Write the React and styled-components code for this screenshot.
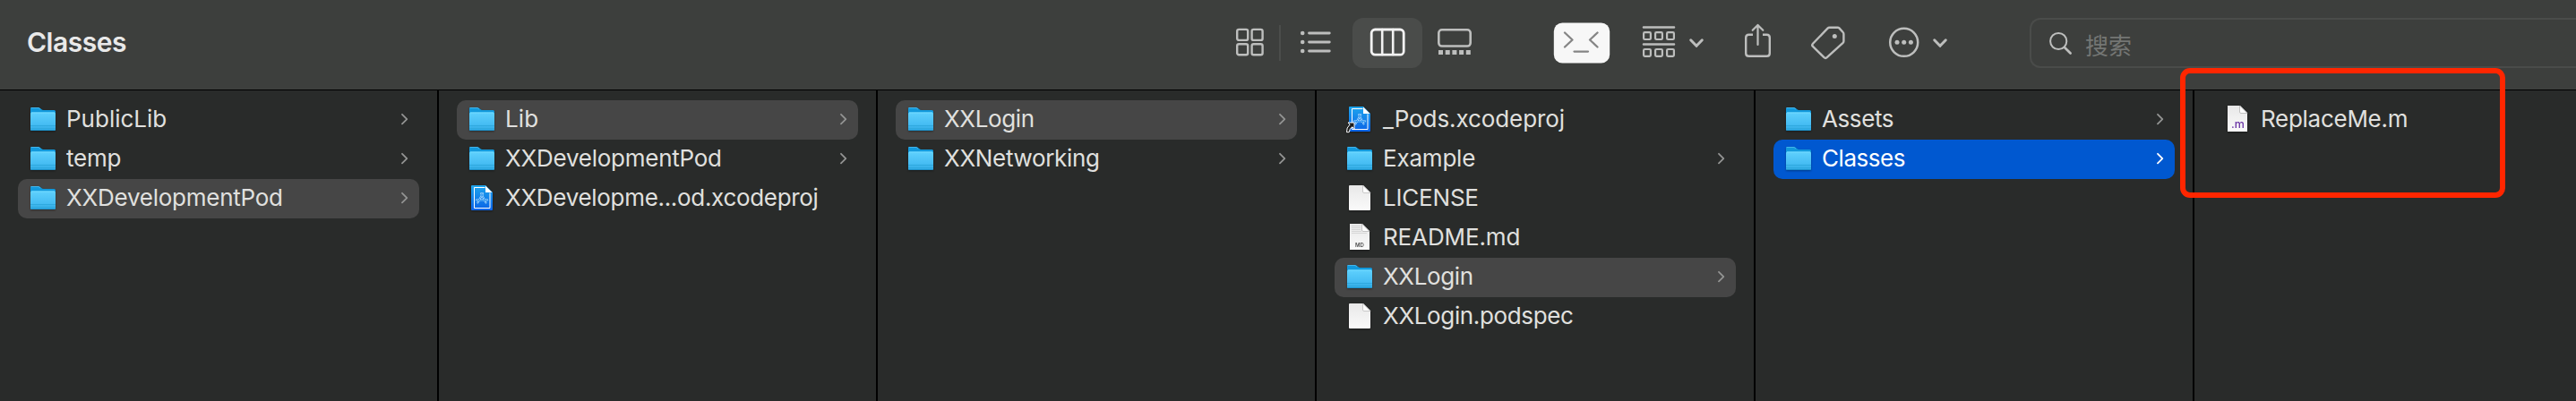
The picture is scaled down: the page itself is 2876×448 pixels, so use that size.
import React from "react";
import styled, { createGlobalStyle } from "styled-components";

const Global = createGlobalStyle`
  * { box-sizing: border-box; }
  html, body { margin: 0; height: 100%; overflow: hidden; background: #292b2a; }
`;

const Window = styled.main`
  position: relative;
  display: flex;
  flex-direction: column;
  width: 2876px;
  height: 448px;
  overflow: hidden;
  background: #292b2a;
  color: #e0e0df;
  font-family: Inter, "Noto Sans CJK SC", sans-serif;
`;

const Toolbar = styled.header`
  flex: none;
  display: flex;
  align-items: center;
  height: 101px;
  padding: 0 0 4px 30px;
  background: #3d3f3d;
  border-bottom: 1px solid #000;
  color: #bdbebd;
`;

const Title = styled.h1`
  flex: 0 0 1350px;
  margin: 0;
  padding-bottom: 2px;
  font-size: 30px;
  line-height: 40px;
  font-weight: 600;
  letter-spacing: -0.5px;
  color: #e9e9e9;
`;

const ToolGroup = styled.div`
  display: flex;
  align-items: center;
  margin-left: ${(p) => p.$before || 0}px;
  gap: ${(p) => p.$gap || 0}px;
`;

const ToolIcon = styled.svg`
  display: block;
  flex: none;
  overflow: visible;
  fill: none;
  stroke: currentColor;
  stroke-width: 2.4;
  stroke-linecap: round;
  stroke-linejoin: round;
`;

const Separator = styled.span`
  width: 2px;
  height: 40px;
  margin: 0 22px 0 17px;
  background: #4b4d4b;
`;

const ActiveTool = styled.span`
  display: flex;
  justify-content: center;
  align-items: center;
  width: 78px;
  height: 56px;
  margin: 0 17px 0 24px;
  border-radius: 12px;
  background: #4a4c4a;
  color: #f2f2f2;
`;

const SearchField = styled.div`
  flex: 1;
  display: flex;
  align-items: center;
  gap: 15px;
  height: 56px;
  margin-left: 92px;
  padding-left: 20px;
  border: 2px solid #4a4c4a;
  border-right: 0;
  border-radius: 12px 0 0 12px;
`;

const Placeholder = styled.span`
  padding-top: 3px;
  font-family: "Noto Sans CJK SC", sans-serif;
  font-size: 26px;
  line-height: 40px;
  color: #747674;
`;

const Browser = styled.section`
  flex: 1;
  display: flex;
  min-height: 0;
`;

const Column = styled.ul`
  flex: 0 0 490px;
  margin: 0;
  padding: 11px 20px 0;
  list-style: none;
  border-right: 2px solid #000;

  &:last-child {
    flex: 1;
    border-right: 0;
  }
`;

const ROW_BACKGROUND = { path: "#464646", focus: "#0058d0" };

const Row = styled.li`
  display: flex;
  align-items: center;
  height: 44px;
  padding: 0 12px;
  border-radius: 10px;
  background: ${(p) => ROW_BACKGROUND[p.$state] || "transparent"};
  color: ${(p) => (p.$state === "focus" ? "#fff" : "inherit")};
`;

const FileIcon = styled.svg`
  flex: none;
  display: block;
  margin-right: 10px;
  overflow: visible;
  filter: drop-shadow(0 1px 1px rgba(0, 0, 0, 0.35));
`;

const Label = styled.span`
  flex: 1;
  padding-bottom: 3px;
  font-size: 26px;
  line-height: 41px;
  letter-spacing: ${(p) => p.$tracking || 0}px;
  white-space: nowrap;
`;

const RowChevron = styled.svg`
  flex: none;
  display: block;
  fill: none;
  stroke: ${(p) => (p.$state === "focus" ? "#fff" : "#939493")};
  stroke-width: 1.8;
  stroke-linecap: round;
  stroke-linejoin: round;
`;

const Highlight = styled.div`
  position: absolute;
  left: 2434px;
  top: 76px;
  width: 363px;
  height: 145px;
  border: 6px solid #ff2600;
  border-radius: 11px;
`;

const Folder = () => (
  <FileIcon width="32" height="32" viewBox="0 0 32 32">
    <path d="M2 3.500Q2 2 3.500 2h7q1.300 0 2.200.8l1.500 1.300q1 .9 2.300.9h12Q30 5 30 6.500V12H2z" fill="#1299dc" />
    <path d="M2.500 2.500h8.500l2 1.500" stroke="#43b4ea" strokeWidth="1" fill="none" />
    <path d="M2 9Q2 7.500 3.500 7.500h25Q30 7.500 30 9v17.500Q30 28 28.500 28h-25Q2 28 2 26.500z" fill="url(#folderFront)" />
    <path d="M3 8h26" stroke="#74dbff" strokeWidth="1" />
    <path d="M2 22.500h28M2 25.500h28" stroke="#2fa9df" strokeWidth="1" />
    <path d="M2.500 27.500h27" stroke="#1c93cc" strokeWidth="1" />
  </FileIcon>
);

const Plain = () => (
  <FileIcon width="32" height="32" viewBox="0 0 32 32">
    <path d="M5 1h15l8 8v19q0 1-1 1H5q-1 0-1-1V2q0-1 1-1z" fill="url(#paper)" />
    <path d="M19.500 1l8.500 8.500h-7q-1.500 0-1.500-1.500z" fill="#fff" stroke="#bcbcbc" strokeWidth=".8" />
  </FileIcon>
);

const NarrowPage = () => (
  <>
    <path d="M5 0h14l8 8v21H5z" fill="url(#paper)" />
    <path d="M18.500 0L27 8.500h-7q-1.500 0-1.500-1.500z" fill="#fff" stroke="#b5b5b5" strokeWidth=".8" />
  </>
);

const Markdown = () => (
  <FileIcon width="32" height="32" viewBox="0 0 32 32">
    <NarrowPage />
    <path d="M7 2.500h10M7 4.500h10M7 6.500h10M7 8.500h11M7 10.500h17" stroke="#cfcfcf" strokeWidth=".8" />
    <text x="16" y="25.800" textAnchor="middle" fontSize="6" fontWeight="600" fontFamily="Inter, sans-serif" fill="#4c4c4c">MD</text>
  </FileIcon>
);

const ObjC = () => (
  <FileIcon width="32" height="32" viewBox="0 0 32 32">
    <NarrowPage />
    <text x="16.500" y="25" textAnchor="middle" fontSize="12.500" fontWeight="500" fontFamily="Inter, sans-serif" fill="#6a35a5">.m</text>
  </FileIcon>
);

const Xcode = ({ alias }) => (
  <FileIcon width="32" height="32" viewBox="0 0 32 32">
    <path d="M5 1h15l8 8v19q0 1-1 1H5q-1 0-1-1V2q0-1 1-1z" fill="url(#xcode)" />
    <path d="M19.500 3.500H7.500v23h17.500V9.500" fill="none" stroke="#fff" strokeWidth="1" />
    <path d="M20 1.500l7.500 7.500H20z" fill="#fff" />
    <path d="M15.200 10.200l5.300 10.200M17 10.200l-5.600 10.200M10 17.400h12.200" fill="none" stroke="#d8eeff" strokeWidth="1.900" strokeLinecap="round" />
    <path d="M15.200 10.200l5.300 10.200M17 10.200l-5.600 10.200M10 17.400h12.200" fill="none" stroke="#1a8df0" strokeWidth=".9" strokeLinecap="round" />
    {alias && (
      <path d="M3 19h7v7l-2.300-2.300q-3 2-3.500 6H1.500q-.5-5 3.500-8.500z" fill="#1c1c1c" stroke="#fff" strokeWidth="1" strokeLinejoin="round" />
    )}
  </FileIcon>
);

const ICONS = {
  folder: <Folder />,
  file: <Plain />,
  md: <Markdown />,
  objc: <ObjC />,
  xcode: <Xcode />,
  alias: <Xcode alias />,
};

const COLUMNS = [
  [
    { name: "PublicLib", icon: "folder", tracking: 0 },
    { name: "temp", icon: "folder", tracking: -0.2 },
    { name: "XXDevelopmentPod", icon: "folder", tracking: -0.25, state: "path" },
  ],
  [
    { name: "Lib", icon: "folder", tracking: 0.1, state: "path" },
    { name: "XXDevelopmentPod", icon: "folder", tracking: -0.25 },
    { name: "XXDevelopme...od.xcodeproj", icon: "xcode", tracking: -0.31 },
  ],
  [
    { name: "XXLogin", icon: "folder", tracking: -0.38, state: "path" },
    { name: "XXNetworking", icon: "folder", tracking: -0.33 },
  ],
  [
    { name: "_Pods.xcodeproj", icon: "alias", tracking: -0.08 },
    { name: "Example", icon: "folder", tracking: -0.2 },
    { name: "LICENSE", icon: "file", tracking: -0.2 },
    { name: "README.md", icon: "md", tracking: -0.12 },
    { name: "XXLogin", icon: "folder", tracking: -0.38, state: "path" },
    { name: "XXLogin.podspec", icon: "file", tracking: -0.36 },
  ],
  [
    { name: "Assets", icon: "folder", tracking: -0.4 },
    { name: "Classes", icon: "folder", tracking: -0.45, state: "focus" },
  ],
  [{ name: "ReplaceMe.m", icon: "objc", tracking: -0.28 }],
];

const Entry = ({ item }) => (
  <Row $state={item.state}>
    {ICONS[item.icon]}
    <Label $tracking={item.tracking}>{item.name}</Label>
    {item.icon === "folder" && (
      <RowChevron $state={item.state} width="8" height="16" viewBox="0 0 8 16">
        <path d="M1 1.800l5.300 5.300L1 12.400" />
      </RowChevron>
    )}
  </Row>
);

const DropChevron = () => (
  <ToolIcon width="16" height="48" viewBox="0 0 16 48">
    <path d="M1.700 20.800L8 27.300l6.300-6.500" strokeWidth="3" />
  </ToolIcon>
);

const Gradients = () => (
  <svg width="0" height="0" display="block">
    <defs>
      <linearGradient id="folderFront" x1="0" y1="0" x2="0" y2="1">
        <stop offset="0" stopColor="#5fd0fd" />
        <stop offset=".65" stopColor="#46bdf3" />
        <stop offset="1" stopColor="#2fa8e2" />
      </linearGradient>
      <linearGradient id="paper" x1="0" y1="0" x2="0" y2="1">
        <stop offset="0" stopColor="#e8e8e8" />
        <stop offset="1" stopColor="#fafafa" />
      </linearGradient>
      <linearGradient id="xcode" x1="0" y1="0" x2="0" y2="1">
        <stop offset="0" stopColor="#1ea6ee" />
        <stop offset="1" stopColor="#0a62e6" />
      </linearGradient>
    </defs>
  </svg>
);

export default function App() {
  return (
    <Window>
      <Global />
      <Gradients />
      <Toolbar>
        <Title>Classes</Title>
        <ToolGroup>
          <ToolIcon width="31" height="48" viewBox="0 0 31 48">
            <rect x="1.200" y="8.900" width="12" height="12" rx="2" />
            <rect x="17.600" y="8.900" width="12" height="12" rx="2" />
            <rect x="1.200" y="25.200" width="12" height="12" rx="2" />
            <rect x="17.600" y="25.200" width="12" height="12" rx="2" />
          </ToolIcon>
          <Separator />
          <ToolIcon width="34" height="48" viewBox="0 0 34 48">
            <path d="M9.500 13h22.800M9.500 23h22.800M9.500 33h22.800" strokeWidth="2.800" />
            <g fill="currentColor" stroke="none">
              <circle cx="2.200" cy="13" r="2.300" />
              <circle cx="2.200" cy="23" r="2.300" />
              <circle cx="2.200" cy="33" r="2.300" />
            </g>
          </ToolIcon>
          <ActiveTool>
            <ToolIcon width="38" height="48" viewBox="0 0 38 48">
              <rect x="1.200" y="9" width="36" height="28.200" rx="4" strokeWidth="2.800" />
              <path d="M13.200 9v28M25.200 9v28" strokeWidth="2.600" />
            </ToolIcon>
          </ActiveTool>
          <ToolIcon width="38" height="48" viewBox="0 0 38 48">
            <rect x="1.300" y="9.300" width="35.400" height="18.200" rx="3.500" strokeWidth="2.600" />
            <path d="M1 32h5v5h-5zM8.700 32h5v5h-5zM16.400 32h5v5h-5zM24.100 32h5v5h-5zM31.800 32h5v5h-5z" fill="currentColor" stroke="none" />
          </ToolIcon>
        </ToolGroup>
        <ToolGroup $before={91}>
          <ToolIcon width="64" height="48" viewBox="0 0 64 48">
            <rect x=".8" y="1.500" width="62.400" height="45" rx="9.500" fill="#f7f7f7" stroke="none" />
            <path d="M13 12.500l8.500 8L13 28.500M49.500 12.500L41 20.500l8.500 8M23.500 33.600h15.500" stroke="#858585" strokeWidth="2.300" />
          </ToolIcon>
        </ToolGroup>
        <ToolGroup $before={36} $gap={16}>
          <ToolIcon width="36" height="48" viewBox="0 0 36 48">
            <path d="M1 6.500h34M1 25.500h34" strokeWidth="2.600" />
            <rect x="1.100" y="12.200" width="7.800" height="7.800" rx="1.200" strokeWidth="2.200" />
            <rect x="14.100" y="12.200" width="7.800" height="7.800" rx="1.200" strokeWidth="2.200" />
            <rect x="27.100" y="12.200" width="7.800" height="7.800" rx="1.200" strokeWidth="2.200" />
            <rect x="1.100" y="31" width="7.800" height="7.800" rx="1.200" strokeWidth="2.200" />
            <rect x="14.100" y="31" width="7.800" height="7.800" rx="1.200" strokeWidth="2.200" />
            <rect x="27.100" y="31" width="7.800" height="7.800" rx="1.200" strokeWidth="2.200" />
          </ToolIcon>
          <DropChevron />
        </ToolGroup>
        <ToolGroup $before={46} $gap={45}>
          <ToolIcon width="29" height="48" viewBox="0 0 29 48">
            <path d="M9 14.800H4.500q-3.300 0-3.300 3.300v17.300q0 3.300 3.300 3.300h20q3.300 0 3.300-3.300V18.100q0-3.300-3.300-3.300H20" strokeLinecap="butt" />
            <path d="M14.500 26V4.500M8.700 9.800l5.800-5.900 5.800 5.900" strokeWidth="2.200" />
          </ToolIcon>
          <ToolIcon width="38" height="48" viewBox="0 0 38 48">
            <path d="M20.500 6.700h9.200q1 0 1.700.7l4.200 4.600q.8.800.8 2V22q0 1-.8 1.800L17.700 40.200q-1.600 1.500-3.200 0L2 27.900q-1.500-1.500 0-3.100L18.500 7.600q.9-.9 2-.9z" />
            <circle cx="26.300" cy="16.500" r="2.500" fill="currentColor" stroke="none" />
          </ToolIcon>
        </ToolGroup>
        <ToolGroup $before={49} $gap={15}>
          <ToolIcon width="34" height="48" viewBox="0 0 34 48">
            <circle cx="16.700" cy="23.300" r="15.500" strokeWidth="2.500" />
            <g fill="currentColor" stroke="none">
              <circle cx="9" cy="23.300" r="2.500" />
              <circle cx="16.700" cy="23.300" r="2.500" />
              <circle cx="24.400" cy="23.300" r="2.500" />
            </g>
          </ToolIcon>
          <DropChevron />
        </ToolGroup>
        <SearchField>
          <ToolIcon width="25" height="48" viewBox="0 0 25 48">
            <circle cx="10.200" cy="22" r="9.100" strokeWidth="2" />
            <path d="M17 29l6.600 6.500" strokeWidth="2.700" />
          </ToolIcon>
          <Placeholder>搜索</Placeholder>
        </SearchField>
      </Toolbar>
      <Browser>
        {COLUMNS.map((items, i) => (
          <Column key={i}>
            {items.map((item) => (
              <Entry key={item.name} item={item} />
            ))}
          </Column>
        ))}
      </Browser>
      <Highlight />
    </Window>
  );
}
